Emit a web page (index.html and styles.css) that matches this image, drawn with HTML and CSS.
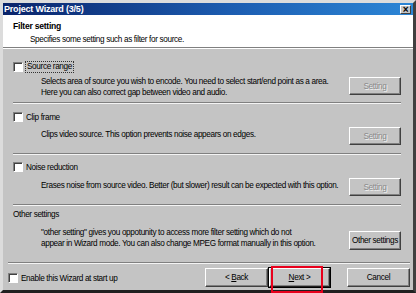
FILE: index.html
```html
<!DOCTYPE html>
<html lang="en">

<head>
  <meta charset="UTF-8">
  <title>Project Wizard (3/5)</title>
  <link rel="stylesheet" href="styles.css">
</head>

<body>
  <div class="window">
    <div class="titlebar">
      <span>Project Wizard (3/5)</span>
      <span class="close">&#215;</span>
    </div>

    <div class="header">
      <h1>Filter setting</h1>
      <p>Specifies some setting such as filter for source.</p>
    </div>

    <div class="option first">
      <label class="check"><span class="box"></span><span class="focus">Source range</span></label>
      <div class="option-body">
        <p>Selects area of source you wish to encode. You need to select start/end point as a area.<br>
          Here you can also correct gap between video and audio.</p>
        <button class="btn disabled">Setting</button>
      </div>
    </div>

    <div class="option second">
      <label class="check"><span class="box"></span>Clip frame</label>
      <div class="option-body">
        <p>Clips video source. This option prevents noise appears on edges.</p>
        <button class="btn disabled">Setting</button>
      </div>
    </div>

    <div class="option third">
      <label class="check"><span class="box"></span>Noise reduction</label>
      <div class="option-body">
        <p>Erases noise from source video. Better (but slower) result can be expected with this option.</p>
        <button class="btn disabled">Setting</button>
      </div>
    </div>

    <div class="option other">
      <div class="other-title">Other settings</div>
      <div class="option-body">
        <p>"other setting" gives you oppotunity to access more filter setting which do not<br>
          appear in Wizard mode. You can also change MPEG format manually in this option.</p>
        <button class="btn">Other settings</button>
      </div>
    </div>

    <div class="footer">
      <label class="check"><span class="box"></span>Enable this Wizard at start up</label>
      <div class="nav">
        <button class="btn wide">&lt; <u>B</u>ack</button>
        <span class="highlight">
          <button class="btn wide default"><u>N</u>ext &gt;</button>
        </span>
        <button class="btn wide cancel">Cancel</button>
      </div>
    </div>
  </div>
</body>

</html>
```

FILE: styles.css
```css
* {
  box-sizing: border-box;
}

body {
  margin: 0;
  background: #c4c4c4;
  font-family: "Liberation Sans", Arial, sans-serif;
  font-size: 8.2px;
  letter-spacing: -0.35px;
  color: #000;
}

p {
  margin: 0;
  white-space: nowrap;
}

.window {
  width: 416px;
  height: 293px;
  background: #c4c4c4;
  border: 3px solid;
  border-color: #dcdcdc #404040 #202020 #dcdcdc;
  display: flex;
  flex-direction: column;
}

.titlebar {
  height: 12px;
  padding: 0 2px 0 1px;
  background: linear-gradient(to right, #0a246a, #1c5cb0 55%, #2c86d6);
  color: #fff;
  font-weight: bold;
  font-size: 9px;
  letter-spacing: -0.2px;
  display: flex;
  align-items: center;
  justify-content: space-between;
}

.close {
  width: 11px;
  height: 9px;
  background: #c4c4c4;
  color: #000;
  font-size: 10px;
  line-height: 8px;
  text-align: center;
  border: 1px solid;
  border-color: #fff #404040 #404040 #fff;
}

.header {
  height: 33px;
  background: #fff;
  padding: 6px 0 0 10px;
  border-bottom: 1px solid #808080;
  box-shadow: 0 1px 0 #fff;
}

.header h1 {
  margin: 0;
  font-size: 8.6px;
  letter-spacing: -0.25px;
  line-height: 11px;
}

.header p {
  padding-left: 17px;
  margin-top: 2px;
  line-height: 11px;
}

.option {
  margin: 0 12px 0 10px;
  border-bottom: 1px solid #808080;
  box-shadow: 0 1px 0 #f4f4f4;
}

.first {
  height: 55px;
  padding-top: 14px;
}

.second {
  height: 51px;
  padding-top: 9px;
}

.third {
  height: 51px;
  padding-top: 8px;
}

.other {
  height: 57px;
  border: 0;
  box-shadow: none;
  padding-top: 5px;
}

.check {
  display: flex;
  align-items: center;
  gap: 3px;
  height: 10px;
}

.box {
  width: 10px;
  height: 10px;
  background: #fff;
  border: 1px solid;
  border-color: #808080 #fff #fff #808080;
  box-shadow: inset 1px 1px 0 #404040;
}

.focus {
  outline: 1px dotted #333;
  padding: 0 1px;
  line-height: 10px;
}

.option-body {
  display: flex;
  align-items: center;
  justify-content: space-between;
  padding-left: 28px;
  margin-top: 5px;
}

.first .option-body {
  align-items: flex-start;
}

.first .option-body p {
  margin-top: -1px;
}

.third .option-body {
  margin-top: 6px;
}

.option-body p {
  line-height: 11px;
  padding-bottom: 4px;
}

.other-title {
  height: 10px;
  line-height: 10px;
}

.other .option-body {
  margin-top: 7px;
}

.btn {
  width: 52px;
  height: 18px;
  flex: none;
  padding: 0;
  white-space: nowrap;
  font-family: inherit;
  font-size: inherit;
  letter-spacing: inherit;
  color: #000;
  background: #c4c4c4;
  border: 1px solid;
  border-color: #fff #404040 #404040 #fff;
  box-shadow: inset -1px -1px 0 #808080;
}

.disabled {
  color: #8a8a8a;
  text-shadow: 1px 1px 0 #f2f2f2;
}

.other .btn {
  height: 19px;
}

.footer {
  margin: 0 3px 0 5px;
  padding-top: 5px;
  border-top: 1px solid #808080;
  box-shadow: inset 0 1px 0 #f4f4f4;
  display: flex;
  justify-content: space-between;
}

.footer .check {
  margin-top: 5px;
}

.nav {
  display: flex;
  align-items: flex-start;
}

.wide {
  width: 63px;
  height: 19px;
}

.highlight {
  position: relative;
  margin-left: 1px;
}

.highlight::after {
  content: "";
  position: absolute;
  left: 2px;
  top: -2px;
  width: 48px;
  height: 23px;
  border: 2px solid #e8001c;
}

.default {
  width: 61px;
  border-color: #fff #202020 #202020 #fff;
  outline: 1px solid #000;
}

.cancel {
  margin-left: 17px;
}
```
